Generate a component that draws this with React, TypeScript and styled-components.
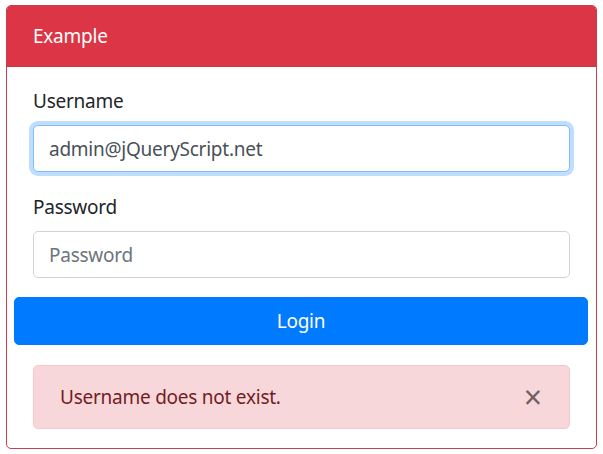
import { createGlobalStyle } from 'styled-components';
import styled from 'styled-components';

const FONT = '"Noto Sans", "Open Sans", "Liberation Sans", sans-serif';

const Global = createGlobalStyle`
  html, body {
    margin: 0;
    padding: 0;
    background: #fff;
  }
  body {
    font-family: ${FONT};
    font-size: 19px;
    letter-spacing: -0.25px;
    line-height: 1.5;
    color: #212529;
  }
  * {
    box-sizing: border-box;
  }
`;

const Page = styled.div`
  padding: 5px 6px;
`;

const Card = styled.div`
  border: 1px solid #c93e50;
  border-radius: 5px;
  overflow: hidden;
  background: #fff;
`;

const CardHeader = styled.div`
  background: #dc3545;
  color: #fff;
  padding: 15px 26px;
  line-height: 30px;
  border-bottom: 1px solid #c23a4c;
`;

const CardBody = styled.div`
  padding: 19px 26px 19px;
  display: flex;
  flex-direction: column;
`;

const FormGroup = styled.div`
  display: flex;
  flex-direction: column;
  margin-bottom: 20px;
`;

const Label = styled.label`
  line-height: 30px;
  margin-bottom: 9px;
`;

const Input = styled.input<{ $focused?: boolean }>`
  height: 47px;
  width: 100%;
  padding: 7px 15px;
  font-family: ${FONT};
  font-size: 19px;
  letter-spacing: -0.25px;
  color: #495057;
  background: #fff;
  border: 1px solid ${({ $focused }) => ($focused ? '#80bdff' : '#ced4da')};
  border-radius: 5px;
  outline: none;
  box-shadow: ${({ $focused }) => ($focused ? '0 0 0 4px rgba(0, 123, 255, 0.25)' : 'none')};

  &::placeholder {
    color: #6c757d;
    opacity: 1;
  }
`;

const Button = styled.button`
  margin: -1px -18px 0 -19px;
  height: 48px;
  border: 1px solid #007bff;
  border-radius: 5px;
  background: #007bff;
  color: #fff;
  font-family: ${FONT};
  font-size: 19px;
  letter-spacing: -0.25px;
  line-height: 30px;
  cursor: pointer;
`;

const Alert = styled.div`
  margin-top: 20px;
  display: flex;
  align-items: center;
  justify-content: space-between;
  padding: 15px 26px;
  line-height: 30px;
  color: #721c24;
  background: #f8d7da;
  border: 1px solid #f5c6cb;
  border-radius: 5px;
`;

const Close = styled.button`
  border: 0;
  background: transparent;
  padding: 0;
  margin-right: 1px;
  font-family: ${FONT};
  font-size: 32px;
  font-weight: 400;
  line-height: 1;
  color: #000;
  opacity: 0.55;
  cursor: pointer;
`;

export default function App() {
  return (
    <>
      <Global />
      <Page>
        <Card>
          <CardHeader>Example</CardHeader>
          <CardBody>
            <FormGroup>
              <Label htmlFor="username">Username</Label>
              <Input id="username" $focused defaultValue="admin@jQueryScript.net" autoFocus />
            </FormGroup>
            <FormGroup>
              <Label htmlFor="password">Password</Label>
              <Input id="password" type="password" placeholder="Password" />
            </FormGroup>
            <Button type="button">Login</Button>
            <Alert role="alert">
              <span>Username does not exist.</span>
              <Close type="button" aria-label="Close">×</Close>
            </Alert>
          </CardBody>
        </Card>
      </Page>
    </>
  );
}
